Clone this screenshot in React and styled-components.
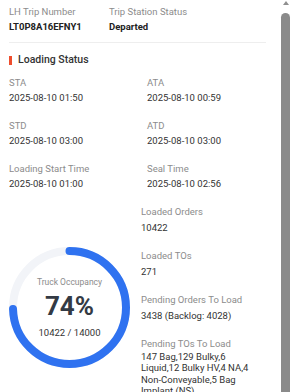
import React from 'react'
import styled, { createGlobalStyle } from 'styled-components'

const GlobalStyle = createGlobalStyle`
    html, body {
        margin: 0;
        padding: 0;
        overflow: hidden;
        background: #fff;
    }
    body {
        font-family: Roboto, "Liberation Sans", sans-serif;
        color: #333;
    }
`

const Frame = styled.div`
    display: flex;
    width: 292px;
    height: 100vh;
    overflow: hidden;
    background: #fff;
`

const Content = styled.div`
    width: 277px;
    flex-shrink: 0;
    box-sizing: border-box;
    padding: 5px 11px 30px 9px;
`

// fake scrollbar on the right edge
const Rail = styled.div`
    width: 15px;
    flex-shrink: 0;
    display: flex;
    flex-direction: column;
    align-items: center;
    padding: 1px 1px 0 3px;
    box-sizing: border-box;
`

const Arrow = styled.div`
    width: 0;
    height: 0;
    border-left: 3.5px solid transparent;
    border-right: 3.5px solid transparent;
    border-bottom: 4px solid #8f8f8f;
`

const Thumb = styled.div`
    width: 9px;
    flex: 1;
    margin-top: 8px;
    background: #8a8a8a;
    border-radius: 4.5px 4.5px 0 0;
`

const TopGrid = styled.div`
    display: grid;
    grid-template-columns: 100px 1fr;
    padding-bottom: 9px;
    border-bottom: 1px solid #eeeeee;
`

const Field = styled.div`
    display: flex;
    flex-direction: column;
    gap: ${p => p.$gap || 2}px;
`

const Label = styled.div`
    font-size: 9.5px;
    line-height: 13px;
    color: #8c8c8c;
`

const Value = styled.div`
    font-size: 9.5px;
    line-height: ${p => (p.$multi ? '11.3px' : '13px')};
    font-weight: ${p => (p.$bold ? 700 : 400)};
    color: ${p => (p.$bold ? '#222' : '#333')};
`

const SectionTitle = styled.div`
    display: flex;
    align-items: center;
    gap: 6px;
    margin-top: 10px;
    font-size: 10.5px;
    font-weight: 500;
    line-height: 14px;
    color: #333;

    &::before {
        content: '';
        width: 3px;
        height: 9px;
        background: #ee4d2d;
    }
`

const InfoGrid = styled.div`
    display: grid;
    grid-template-columns: 138px 1fr;
    row-gap: 15px;
    margin-top: 9px;
`

const Bottom = styled.div`
    display: flex;
    align-items: center;
    gap: 11px;
    margin-top: 15px;
`

const Ring = styled.div`
    position: relative;
    width: 121px;
    height: 121px;
    flex-shrink: 0;
    margin-top: 14px;

    svg {
        display: block;
        transform: rotate(-90deg);
    }
`

const RingCenter = styled.div`
    position: absolute;
    inset: 0;
    display: flex;
    flex-direction: column;
    align-items: center;
    justify-content: center;
`

const RingCaption = styled.div`
    font-size: 8.5px;
    color: #8c8c8c;
    line-height: 12px;
`

const RingPercent = styled.div`
    font-size: 26px;
    font-weight: 700;
    color: #333a44;
    line-height: 30px;
    margin: 3px 0 6px;
`

const RingCount = styled.div`
    font-size: 9.5px;
    color: #333;
    line-height: 12px;
`

const List = styled.div`
    width: 108px;
    display: flex;
    flex-direction: column;
    gap: 15px;
`

const r = 56.5
const circ = 2 * Math.PI * r

const Occupancy = ({ loaded, total }) => {
    const pct = Math.round((loaded / total) * 100)
    return (
        <Ring>
            <svg width="121" height="121" viewBox="0 0 121 121">
                <circle cx="60.5" cy="60.5" r={r} fill="none" stroke="#f2f4f8" strokeWidth="8" />
                <circle
                    cx="60.5"
                    cy="60.5"
                    r={r}
                    fill="none"
                    stroke="#2f72f0"
                    strokeWidth="8"
                    strokeLinecap="round"
                    strokeDasharray={`${(circ * loaded) / total} ${circ}`}
                />
            </svg>
            <RingCenter>
                <RingCaption>Truck Occupancy</RingCaption>
                <RingPercent>{pct}%</RingPercent>
                <RingCount>{loaded} / {total}</RingCount>
            </RingCenter>
        </Ring>
    )
}

const times = [
    ['STA', '2025-08-10 01:50'],
    ['ATA', '2025-08-10 00:59'],
    ['STD', '2025-08-10 03:00'],
    ['ATD', '2025-08-10 03:00'],
    ['Loading Start Time', '2025-08-10 01:00'],
    ['Seal Time', '2025-08-10 02:56'],
]

const counts = [
    ['Loaded Orders', '10422'],
    ['Loaded TOs', '271'],
    ['Pending Orders To Load', '3438 (Backlog: 4028)'],
    ['Pending TOs To Load', '147 Bag,129 Bulky,6 Liquid,12 Bulky HV,4 NA,4 Non-Conveyable,5 Bag Implant (NS)'],
]

const App = () => {
    return (
        <Frame>
            <GlobalStyle />
            <Content>
                <TopGrid>
                    <Field>
                        <Label>LH Trip Number</Label>
                        <Value $bold>LT0P8A16EFNY1</Value>
                    </Field>
                    <Field>
                        <Label>Trip Station Status</Label>
                        <Value $bold>Departed</Value>
                    </Field>
                </TopGrid>

                <SectionTitle>Loading Status</SectionTitle>

                <InfoGrid>
                    {times.map(([label, value]) => (
                        <Field key={label}>
                            <Label>{label}</Label>
                            <Value>{value}</Value>
                        </Field>
                    ))}
                </InfoGrid>

                <Bottom>
                    <Occupancy loaded={10422} total={14000} />
                    <List>
                        {counts.map(([label, value]) => (
                            <Field key={label} $gap={value.length > 30 ? 1 : 3}>
                                <Label>{label}</Label>
                                <Value $multi={value.length > 30}>{value}</Value>
                            </Field>
                        ))}
                    </List>
                </Bottom>
            </Content>
            <Rail>
                <Arrow />
                <Thumb />
            </Rail>
        </Frame>
    )
}

export default App
